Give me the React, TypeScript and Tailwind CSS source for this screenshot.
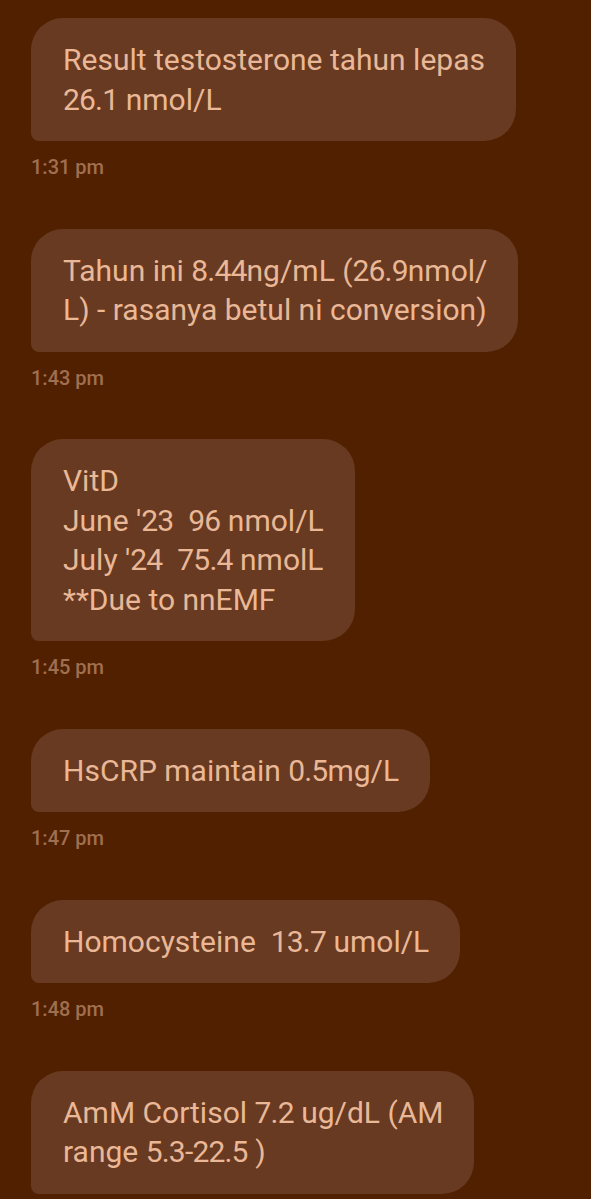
const messages = [
  { lines: ["Result testosterone tahun lepas", "26.1 nmol/L"], time: "1:31 pm" },
  { lines: ["Tahun ini 8.44ng/mL (26.9nmol/", "L) - rasanya betul ni conversion)"], time: "1:43 pm" },
  {
    lines: ["VitD", "June '23  96 nmol/L", "July '24  75.4 nmolL", "**Due to nnEMF"],
    time: "1:45 pm",
  },
  { lines: ["HsCRP maintain 0.5mg/L"], time: "1:47 pm" },
  { lines: ["Homocysteine  13.7 umol/L"], time: "1:48 pm" },
  { lines: ["AmM Cortisol 7.2 ug/dL (AM", "range 5.3-22.5 )"], time: "" },
];

// digits in the screenshot font are narrower than Roboto's tabular ones
const Line = ({ text }: { text: string }) => (
  <div>
    {text.split(/(\d[\d.\-]*)/).map((part, i) =>
      /^\d/.test(part) ? (
        <span key={i} className="tracking-[-0.8px]">
          {part}
        </span>
      ) : (
        <span key={i}>{part}</span>
      )
    )}
  </div>
);

const Bubble = ({ lines, time }: { lines: string[]; time: string }) => (
  <div className="flex flex-col items-start">
    <div className="rounded-[32px] rounded-bl-[8px] bg-[#683a21] pl-[32px] pr-[31px] py-[22px] text-[30px] leading-[39.5px] text-[#eab897] whitespace-pre">
      {lines.map((line, i) => (
        <Line key={i} text={line} />
      ))}
    </div>
    {time && (
      <div className="mt-[14px] mb-[49.5px] text-[20px] leading-[24px] font-medium text-[#a06f4f]">
        {time}
      </div>
    )}
  </div>
);

export default function App() {
  return (
    <div
      className="min-h-[1199px] w-[591px] overflow-hidden bg-[#512000] pl-[31px] pt-[18px]"
      style={{ fontFamily: "Roboto, 'Noto Sans', sans-serif" }}
    >
      {messages.map((m, i) => (
        <Bubble key={i} lines={m.lines} time={m.time} />
      ))}
    </div>
  );
}
